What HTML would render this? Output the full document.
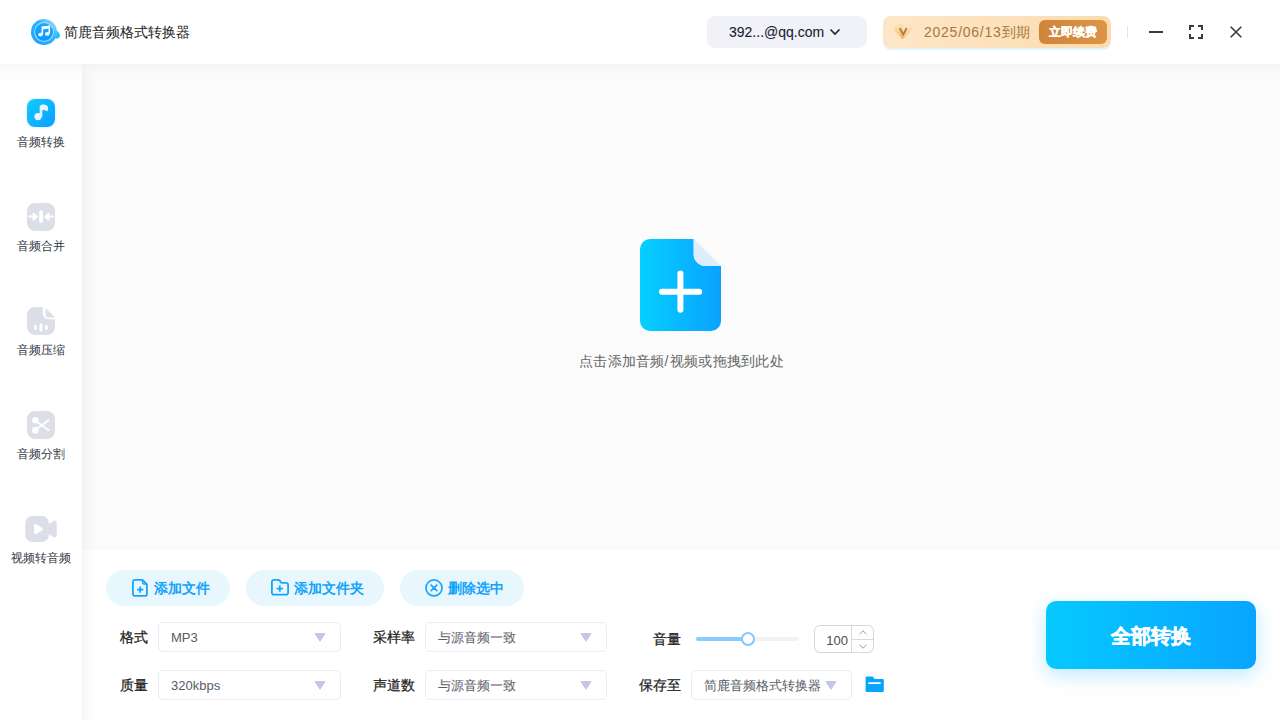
<!DOCTYPE html>
<html><head><meta charset="utf-8">
<style>
*{box-sizing:border-box;margin:0;padding:0}
html,body{width:1280px;height:720px;overflow:hidden;background:#fff;font-family:"Liberation Sans",sans-serif;}
.abs{position:absolute}
#header{left:0;top:0;width:1280px;height:64px;background:#fff;z-index:3}
#hshadow{left:0;top:64px;width:1280px;height:18px;background:linear-gradient(rgba(0,0,0,0.03),rgba(0,0,0,0.012) 40%,rgba(0,0,0,0));z-index:2}
#sidebar{left:0;top:64px;width:82px;height:656px;background:#fff;z-index:1}
#main{left:82px;top:64px;width:1198px;height:486px;background:#fbfbfb}
#vshadow{left:82px;top:64px;width:18px;height:656px;background:linear-gradient(90deg,rgba(0,0,0,0.035),rgba(0,0,0,0.013) 40%,rgba(0,0,0,0));z-index:1;-webkit-mask-image:linear-gradient(transparent,#000 14px)}
#bottom{left:82px;top:550px;width:1198px;height:170px;background:#fff}
.title{left:64px;top:22px;font-size:14px;line-height:20px;color:#222}
.nav{left:0;width:82px;text-align:center;font-size:12px;line-height:16px;color:#323744}
.navicon{left:27px;width:28px;height:28px;border-radius:8px;background:#dcdfe7}
.btn{top:570px;height:36px;border-radius:18px;background:#e8f7fe}
.btntxt{top:578px;font-size:14px;line-height:20px;font-weight:bold;color:#13a3fa}
.lbl{font-size:14px;line-height:18px;font-weight:500;color:#222;-webkit-text-stroke:0.25px #222}
.sel{height:30px;border:1px solid #eaecf2;border-radius:5px;background:#fff;font-size:13px;line-height:30px;padding-left:12px;color:#575b66}
.tri{width:0;height:0;border-left:6px solid transparent;border-right:6px solid transparent;border-top:9px solid #c4c6e4;border-radius:2px}
</style></head><body>
<div id="header" class="abs">
  <div class="abs" style="left:31px;top:18px;width:30px;height:28px">
    <svg width="30" height="28" viewBox="0 0 30 28">
      <defs>
        <linearGradient id="lg1" x1="0" y1="1" x2="1" y2="0"><stop offset="0" stop-color="#1d9fff"/><stop offset="0.6" stop-color="#2fb4ff"/><stop offset="1" stop-color="#b5e6ff"/></linearGradient>
        <linearGradient id="lg2" x1="0" y1="0" x2="0" y2="1"><stop offset="0" stop-color="#1aa8ff"/><stop offset="1" stop-color="#0d98ff"/></linearGradient>
      </defs>
      <path d="M23 11.5 Q26.5 12 28.3 15.5 Q29.8 18.5 27.8 19.9 Q25.8 21 22.5 19.8 Z" fill="#17c4ff"/>
      <circle cx="13" cy="14" r="13" fill="url(#lg1)"/>
      <circle cx="13" cy="14" r="10" fill="#a9dfff"/>
      <circle cx="13" cy="14" r="9" fill="url(#lg2)"/>
      <path d="M11.3 16.3 V9.3 L18.3 8.4 V15.6" stroke="#fff" stroke-width="1.6" fill="none"/>
      <path d="M11.3 9.3 L18.3 8.4 V10.5 L11.3 11.4 Z" fill="#fff"/>
      <ellipse cx="9.5" cy="16.6" rx="2.3" ry="1.9" fill="#eef8ff"/>
      <ellipse cx="16.3" cy="15.9" rx="2.3" ry="1.9" fill="#eef8ff"/>
    </svg>
  </div>
  <div class="abs title">简鹿音频格式转换器</div>

  <div class="abs" style="left:707px;top:16px;width:160px;height:32px;border-radius:8px;background:#f0f2f8"></div>
  <div class="abs" style="left:729px;top:22px;font-size:14px;line-height:20px;color:#1b2230;-webkit-text-stroke:0.1px #1b2230">392...@qq.com</div>
  <svg class="abs" style="left:829px;top:28px" width="12" height="8" viewBox="0 0 12 8"><path d="M1.5 1.5 L6 6 L10.5 1.5" stroke="#222" stroke-width="1.6" fill="none"/></svg>

  <div class="abs" style="left:883px;top:16px;width:228px;height:32px;border-radius:8px;background:linear-gradient(90deg,#fde6c8,#fcdcae);box-shadow:0 2px 1px #e3f1fb"></div>
  <svg class="abs" style="left:893px;top:23px" width="20" height="17" viewBox="0 0 20 17">
    <defs><linearGradient id="dm" x1="0" y1="0" x2="0.3" y2="1"><stop offset="0" stop-color="#fbe7bd"/><stop offset="0.45" stop-color="#f8d699"/><stop offset="1" stop-color="#f4ad50"/></linearGradient></defs>
    <path d="M4.8 1 H15 Q16.6 1 17.5 2.4 L18.6 4.2 Q19.3 5.6 18.4 7 L11 15.6 Q10 16.6 9 15.6 L1.6 7.4 Q0.6 6.2 1.1 4.6 L2.2 2.5 Q3.2 1 4.8 1 Z" fill="url(#dm)"/><path d="M10 1 H15 Q16.6 1 17.5 2.4 L18.6 4.2 Q19.3 5.6 18.4 7 L11 15.6 Q10.5 16.1 10 16.2 Z" fill="#fff" opacity="0.3"/>
    <path d="M7 5.8 L10.3 11.5 L13.3 5.8" stroke="#b97b36" stroke-width="1.9" fill="none" stroke-linecap="round"/>
  </svg>
  <div class="abs" style="left:924px;top:22px;font-size:14px;line-height:20px;color:#a47843"><span style="letter-spacing:0.75px">2025/06/13</span>到期</div>
  <div class="abs" style="left:1039px;top:20px;width:68px;height:24px;border-radius:6px;background:linear-gradient(90deg,#d0843a,#db9547);color:#fff;font-size:12px;line-height:25px;text-align:center;font-weight:bold;-webkit-text-stroke:0.25px #fff">立即续费</div>

  <div class="abs" style="left:1127px;top:26px;width:1px;height:12px;background:#e4e4e4"></div>
  <div class="abs" style="left:1149px;top:31px;width:14px;height:2px;background:#3a3a3a"></div>
  <svg class="abs" style="left:1189px;top:25px" width="14" height="14" viewBox="0 0 14 14"><path d="M1 5 V1 H5 M9 1 H13 V5 M13 9 V13 H9 M5 13 H1 V9" stroke="#3a3a3a" stroke-width="2" fill="none"/></svg>
  <svg class="abs" style="left:1230px;top:26px" width="12" height="12" viewBox="0 0 12 12"><path d="M0.7 0.7 L11.3 11.3 M11.3 0.7 L0.7 11.3" stroke="#3a3a3a" stroke-width="1.6" fill="none"/></svg>
</div>
<div id="hshadow" class="abs"></div>
<div id="sidebar" class="abs">
  <div class="abs navicon" style="top:35px;background:linear-gradient(135deg,#12ccff,#0a9dff);box-shadow:0 0 3px rgba(10,170,255,0.25)">
    <svg width="28" height="28" viewBox="0 0 28 28"><path d="M14 7 V17.5" stroke="#e8f6ff" stroke-width="2.6"/><path d="M12.7 7.5 C14 5.3 17.5 5 19.8 6.6 C21.6 8 21.5 11 20.2 12.6 C19 11.2 16.5 10.8 15 11.2 Z" fill="#e8f6ff"/><circle cx="11" cy="17.6" r="3.6" fill="#e8f6ff"/></svg>
  </div>
  <div class="abs nav" style="top:70px">音频转换</div>
  <div class="abs navicon" style="top:139px">
    <svg width="28" height="28" viewBox="0 0 28 28"><rect x="12.2" y="7.3" width="3.8" height="12.8" rx="1.9" fill="#fff"/><path d="M2.3 13.6 H7" stroke="#fff" stroke-width="2" stroke-linecap="round"/><path d="M6.3 10.3 L10.3 13.6 L6.3 16.9 Z" fill="#fff" stroke="#fff" stroke-width="1.4" stroke-linejoin="round"/><path d="M25.7 13.6 H21" stroke="#fff" stroke-width="2" stroke-linecap="round"/><path d="M21.7 10.3 L17.7 13.6 L21.7 16.9 Z" fill="#fff" stroke="#fff" stroke-width="1.4" stroke-linejoin="round"/></svg>
  </div>
  <div class="abs nav" style="top:174px">音频合并</div>
  <div class="abs" style="left:27px;top:243px;width:28px;height:28px">
    <svg width="28" height="28" viewBox="0 0 28 28"><path d="M8 0 H15.8 C15.8 0 15.8 6 15.8 6.5 C15.8 9.5 18.5 12.2 21.5 12.2 H28 V20 A8 8 0 0 1 20 28 H8 A8 8 0 0 1 0 20 V8 A8 8 0 0 1 8 0 Z" fill="#dcdfe7"/><path d="M18.5 1 L28 10.5 H21.5 A3 3 0 0 1 18.5 7.5 Z" fill="#dcdfe7"/><rect x="7" y="18" width="2.8" height="5" rx="1.4" fill="#fff"/><rect x="12.5" y="16.4" width="2.8" height="8.4" rx="1.4" fill="#fff"/><rect x="18" y="18" width="2.8" height="5" rx="1.4" fill="#fff"/></svg>
  </div>
  <div class="abs nav" style="top:278px">音频压缩</div>
  <div class="abs navicon" style="top:347px">
    <svg width="28" height="28" viewBox="0 0 28 28"><circle cx="8.3" cy="9.2" r="3.2" fill="#fff"/><circle cx="8.3" cy="19.2" r="3.2" fill="#fff"/><path d="M9 10 L21.6 19.2 M9 18.4 L21.6 9.2" stroke="#fff" stroke-width="1.8" stroke-linecap="round"/></svg>
  </div>
  <div class="abs nav" style="top:382px">音频分割</div>
  <div class="abs" style="left:25px;top:452px;width:32px;height:27px">
    <svg width="32" height="27" viewBox="0 0 32 27"><rect x="0.3" y="0" width="23.6" height="26" rx="7" fill="#dcdfe7"/><path d="M22 9 L28.5 5 A2 2 0 0 1 31.7 6.6 V19.5 A2 2 0 0 1 28.5 21 L22 17 Z" fill="#dcdfe7"/><path d="M9 9.5 A1.5 1.5 0 0 1 11.3 8.3 L17.3 12 A1.6 1.6 0 0 1 17.3 14.4 L11.3 18 A1.5 1.5 0 0 1 9 16.9 Z" fill="#fff"/></svg>
  </div>
  <div class="abs nav" style="top:486px">视频转音频</div>
</div>
<div id="main" class="abs">
  <svg class="abs" style="left:558px;top:175px" width="81" height="92" viewBox="0 0 81 92">
    <defs><linearGradient id="dg" x1="0" y1="0" x2="1" y2="0"><stop offset="0" stop-color="#06cfff"/><stop offset="1" stop-color="#0aa2ff"/></linearGradient></defs>
    <path d="M10 0 H53.5 V15 A12 12 0 0 0 65.5 27 H81 V82 A10 10 0 0 1 71 92 H10 A10 10 0 0 1 0 82 V10 A10 10 0 0 1 10 0 Z" fill="url(#dg)"/>
    <path d="M54 0 L81 27 H66 A12 12 0 0 1 54 15 Z" fill="#ddeefa"/>
    <path d="M40.4 34.4 V70.7 M22 52.7 H59.2" stroke="#fff" stroke-width="6" stroke-linecap="round"/>
  </svg>
  <div class="abs" style="left:497px;top:288px;font-size:14px;line-height:18px;color:#666;letter-spacing:0.25px">点击添加音频<span style="letter-spacing:1.5px">/</span>视频或拖拽到此处</div>
</div>
<div id="bottom" class="abs"></div>
<div id="controls">
  <div class="abs btn" style="left:106px;width:124px"></div>
  <svg class="abs" style="left:131px;top:578px" width="18" height="20" viewBox="0 0 18 20"><path d="M3.9 1.9 H11.5 L15.9 6.3 V15.9 A2 2 0 0 1 13.9 17.9 H3.9 A2 2 0 0 1 1.9 15.9 V3.9 A2 2 0 0 1 3.9 1.9 Z" stroke="#14a6fb" stroke-width="1.8" fill="none" stroke-linejoin="round"/><path d="M11.6 2.4 V4.4 Q11.6 5.9 13.1 5.9 H15.4" stroke="#14a6fb" stroke-width="1.5" fill="none"/><path d="M9.2 8.4 V14.8 M6 11.6 H12.4" stroke="#14a6fb" stroke-width="1.8"/></svg>
  <div class="abs btntxt" style="left:154px">添加文件</div>
  <div class="abs btn" style="left:246px;width:138px"></div>
  <svg class="abs" style="left:270px;top:578px" width="20" height="19" viewBox="0 0 20 19"><path d="M3.9 1.9 H8.4 Q9.5 1.9 10.1 3 L10.5 3.7 Q11.1 4.8 12.2 4.8 H16.1 A2 2 0 0 1 18.1 6.8 V14.7 A2 2 0 0 1 16.1 16.7 H3.9 A2 2 0 0 1 1.9 14.7 V3.9 A2 2 0 0 1 3.9 1.9 Z" stroke="#14a6fb" stroke-width="1.8" fill="none" stroke-linejoin="round"/><path d="M9.8 7.4 V13.8 M6.6 10.6 H13" stroke="#14a6fb" stroke-width="1.8"/></svg>
  <div class="abs btntxt" style="left:294px">添加文件夹</div>
  <div class="abs btn" style="left:400px;width:124px"></div>
  <svg class="abs" style="left:425px;top:579px" width="18" height="18" viewBox="0 0 18 18"><circle cx="9" cy="8.9" r="8" stroke="#14a6fb" stroke-width="1.7" fill="none"/><path d="M6.2 6.1 L11.8 11.7 M11.8 6.1 L6.2 11.7" stroke="#14a6fb" stroke-width="1.7" stroke-linecap="round"/></svg>
  <div class="abs btntxt" style="left:448px">删除选中</div>

  <div class="abs lbl" style="left:120px;top:628px">格式</div>
  <div class="abs sel" style="left:158px;top:622px;width:183px">MP3</div>
  <div class="abs tri" style="left:314px;top:633px"></div>
  <div class="abs lbl" style="left:373px;top:628px">采样率</div>
  <div class="abs sel" style="left:425px;top:622px;width:182px">与源音频一致</div>
  <div class="abs tri" style="left:580px;top:633px"></div>

  <div class="abs lbl" style="left:120px;top:676px">质量</div>
  <div class="abs sel" style="left:158px;top:670px;width:183px">320kbps</div>
  <div class="abs tri" style="left:314px;top:681px"></div>
  <div class="abs lbl" style="left:373px;top:676px">声道数</div>
  <div class="abs sel" style="left:425px;top:670px;width:182px">与源音频一致</div>
  <div class="abs tri" style="left:580px;top:681px"></div>

  <div class="abs lbl" style="left:653px;top:630px">音量</div>
  <div class="abs" style="left:696px;top:637px;width:103px;height:4px;border-radius:2px;background:#f2f2f2"></div>
  <div class="abs" style="left:696px;top:637px;width:52px;height:4px;border-radius:2px;background:#8acdfb"></div>
  <div class="abs" style="left:741px;top:632px;width:14px;height:14px;border-radius:50%;background:#fff;border:2.3px solid #84c8fb"></div>
  <div class="abs" style="left:814px;top:625px;width:60px;height:28px;border:1px solid #d6d6d6;border-radius:6px;background:#fff"></div>
  <div class="abs" style="left:851px;top:626px;width:1px;height:26px;background:#d9d9d9"></div>
  <div class="abs" style="left:852px;top:639px;width:21px;height:1px;background:#d9d9d9"></div>
  <div class="abs" style="left:816px;top:631px;width:32px;font-size:13px;line-height:20px;color:#4d4d4d;text-align:right">100</div>
  <svg class="abs" style="left:859px;top:630px" width="8" height="5" viewBox="0 0 8 5"><path d="M0.5 4.2 L4 0.8 L7.5 4.2" stroke="#9a9a9a" stroke-width="1" fill="none"/></svg>
  <svg class="abs" style="left:859px;top:644px" width="8" height="5" viewBox="0 0 8 5"><path d="M0.5 0.8 L4 4.2 L7.5 0.8" stroke="#9a9a9a" stroke-width="1" fill="none"/></svg>

  <div class="abs lbl" style="left:639px;top:676px">保存至</div>
  <div class="abs sel" style="left:691px;top:670px;width:161px">简鹿音频格式转换器</div>
  <div class="abs tri" style="left:825px;top:681px"></div>
  <svg class="abs" style="left:865px;top:676px" width="19" height="16" viewBox="0 0 19 16"><path d="M1.8 0.6 H7.6 L9.6 3 H17.6 A1.2 1.2 0 0 1 18.8 4.2 V14.7 A1.2 1.2 0 0 1 17.6 15.9 H1.8 A1.2 1.2 0 0 1 0.6 14.7 V1.8 A1.2 1.2 0 0 1 1.8 0.6 Z" fill="#05a6fb"/><rect x="3.2" y="6.2" width="12.6" height="1.9" rx="0.9" fill="#fff"/></svg>

  <div class="abs" style="left:1046px;top:601px;width:210px;height:68px;border-radius:10px;background:linear-gradient(90deg,#06c9ff,#08a4ff);box-shadow:0 6px 20px rgba(0,170,255,0.26);color:#fff;font-weight:bold;font-size:20px;line-height:70px;text-align:center;-webkit-text-stroke:0.5px #fff">全部转换</div>
</div>
<div id="vshadow" class="abs"></div>
</body></html>
